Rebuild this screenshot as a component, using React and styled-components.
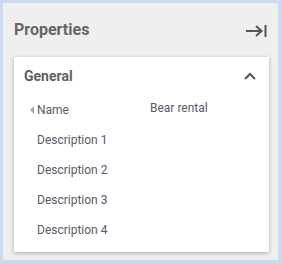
import React from 'react'
import styled, { createGlobalStyle } from 'styled-components'

const Global = createGlobalStyle`
  html, body {
    margin: 0;
    padding: 0;
    background: #c9daf2;
  }
  body {
    font-family: Roboto, 'Liberation Sans', sans-serif;
  }
`

const Frame = styled.div`
  width: 282px;
  height: 263px;
  box-sizing: border-box;
  border-style: solid;
  border-color: #c9daf2;
  border-width: 3px 4px 3px 3px;
  background: #efefef;
  display: flex;
  flex-direction: column;
`

const Header = styled.div`
  display: flex;
  align-items: center;
  justify-content: space-between;
  height: 54px;
  padding: 0 11px 0 11px;
`

const Title = styled.h1`
  margin: 0 0 2px 0;
  font-size: 16px;
  font-weight: 700;
  color: #666666;
`

const CollapseBtn = styled.button`
  border: 0;
  background: none;
  padding: 0;
  display: flex;
  color: #555555;
  margin-top: 2px;
`

const Card = styled.div`
  margin: 0 9px 0 11px;
  background: #ffffff;
  box-shadow: 0 1px 4px rgba(0, 0, 0, 0.3);
  height: 195px;
  box-sizing: border-box;
`

const CardHead = styled.div`
  display: flex;
  align-items: center;
  justify-content: space-between;
  height: 38px;
  padding: 0 13px 0 10px;
`

const CardTitle = styled.h2`
  margin: 0;
  font-size: 14px;
  font-weight: 700;
  color: #606060;
`

const Row = styled.div`
  display: grid;
  grid-template-columns: 113px 1fr;
  height: 30px;
  align-items: center;
  padding-left: 23px;
  font-size: 12px;
  color: #5a5866;
`

const Label = styled.span`
  position: relative;
  &::before {
    content: '';
    display: ${p => (p.$marked ? 'block' : 'none')};
    position: absolute;
    left: -7px;
    top: 50%;
    margin-top: -4px;
    border-style: solid;
    border-width: 4px 4px 4px 0;
    border-color: transparent #a8a8a8 transparent transparent;
  }
`

const Value = styled.span`
  color: #5a5866;
  margin-top: -4px;
`

const rows = [
  { label: 'Name', value: 'Bear rental', marked: true },
  { label: 'Description 1' },
  { label: 'Description 2' },
  { label: 'Description 3' },
  { label: 'Description 4' },
]

export default function App() {
  return (
    <>
      <Global />
      <Frame>
        <Header>
          <Title>Properties</Title>
          <CollapseBtn aria-label="Collapse">
            <svg width="22" height="16" viewBox="0 0 22 16" fill="none" stroke="currentColor" strokeWidth="2">
              <path d="M1 8h15" />
              <path d="M11 3l5.5 5-5.5 5" />
              <path d="M20.5 2v12" />
            </svg>
          </CollapseBtn>
        </Header>
        <Card>
          <CardHead>
            <CardTitle>General</CardTitle>
            <svg width="12" height="8" viewBox="0 0 12 8" fill="none" stroke="#555" strokeWidth="2">
              <path d="M1 7l5-5 5 5" />
            </svg>
          </CardHead>
          {rows.map(r => (
            <Row key={r.label}>
              <Label $marked={r.marked}>{r.label}</Label>
              <Value>{r.value}</Value>
            </Row>
          ))}
        </Card>
      </Frame>
    </>
  )
}
